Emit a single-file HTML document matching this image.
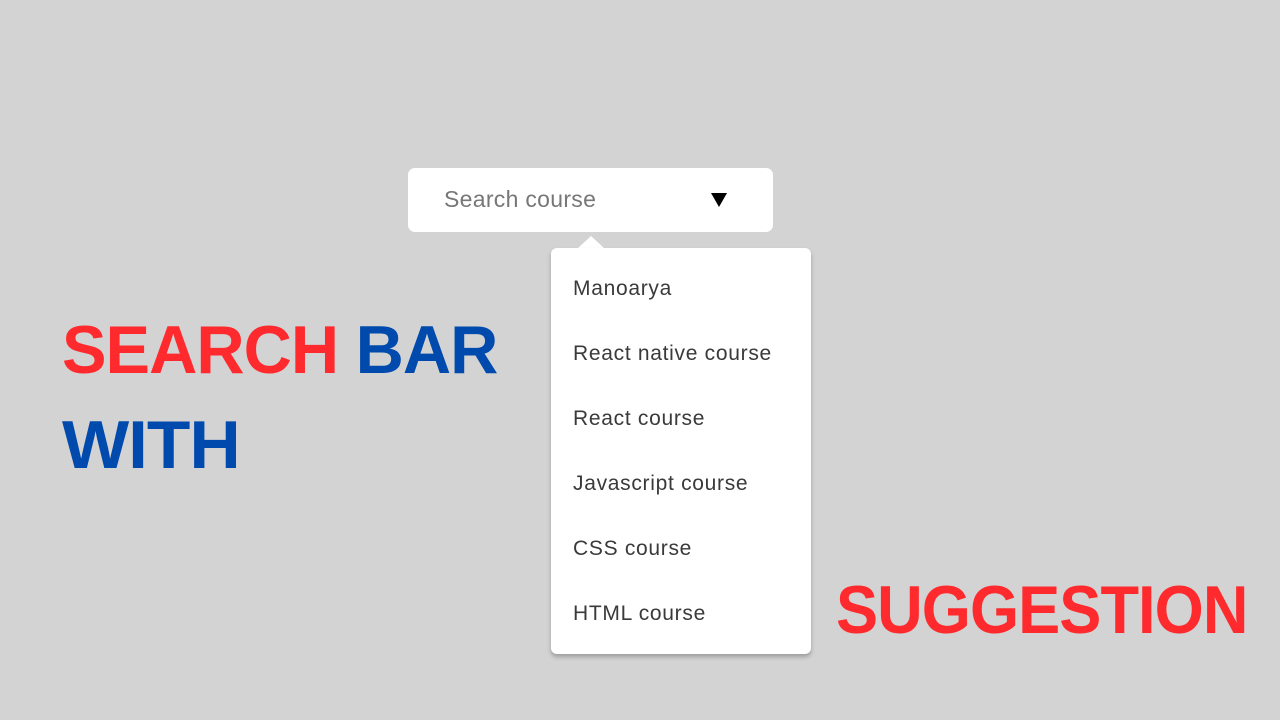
<!DOCTYPE html>
<html><head><style>
body{margin:0;width:1280px;height:720px;background:#d3d3d3;position:relative;overflow:hidden;font-family:"Liberation Sans",sans-serif}
.h{position:absolute;font-weight:bold;font-size:68px;line-height:68px;letter-spacing:-1px;white-space:nowrap;transform-origin:0 0}
.r{color:#ff2a2d}.b{color:#004aad}
.box{position:absolute;left:408px;top:168px;width:365px;height:64px;background:#fff;border-radius:7px}
.ph{position:absolute;left:36px;top:18px;font-size:23px;letter-spacing:.3px;color:#777}
.tri{position:absolute;left:303px;top:25px;width:0;height:0;border-left:8px solid transparent;border-right:8px solid transparent;border-top:14px solid #000}
.dd{position:absolute;left:551px;top:248px;width:260px;height:406px;background:#fff;border-radius:6px;box-shadow:0 3px 4px rgba(0,0,0,.25)}
.arr{position:absolute;left:578px;top:236px;width:0;height:0;border-left:13px solid transparent;border-right:13px solid transparent;border-bottom:12px solid #fff}
.it{position:absolute;left:22px;font-size:21px;letter-spacing:.7px;color:#3a3a3a}
</style></head><body>
<div class="h" style="left:62px;top:316px;transform:scaleX(.982)"><span class="r">SEARCH</span> <span class="b">BAR</span></div>
<div class="h b" style="left:62px;top:411px;transform:scaleX(1.047)">WITH</div>
<div class="h r" style="left:836px;top:576px;transform:scaleX(.928)">SUGGESTION</div>
<div class="box"><div class="ph">Search course</div><div class="tri"></div></div>
<div class="arr"></div>
<div class="dd">
<div class="it" style="top:29px">Manoarya</div>
<div class="it" style="top:94px">React native course</div>
<div class="it" style="top:159px">React course</div>
<div class="it" style="top:224px">Javascript course</div>
<div class="it" style="top:289px">CSS course</div>
<div class="it" style="top:354px">HTML course</div>
</div>
</body></html>
